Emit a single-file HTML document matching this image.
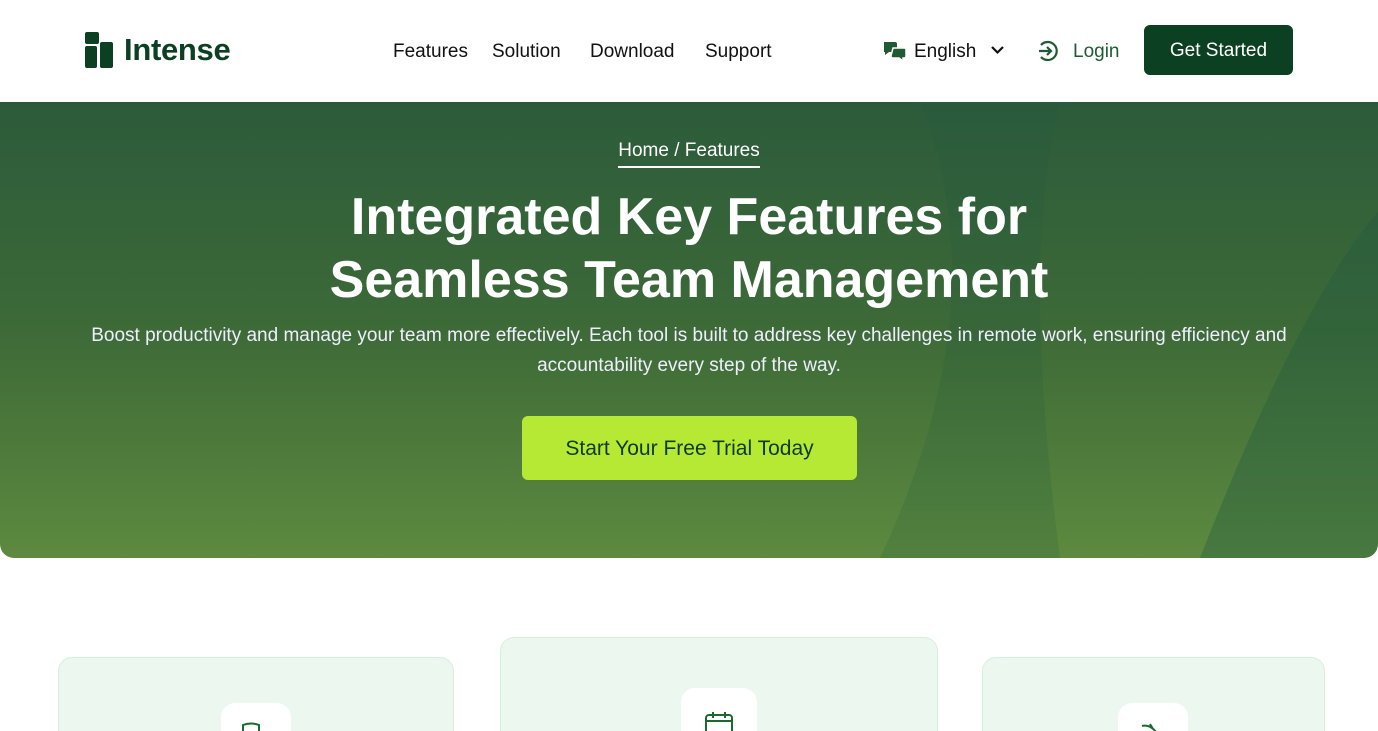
<!DOCTYPE html>
<html><head><meta charset="utf-8"><style>
*{margin:0;padding:0;box-sizing:border-box}
html,body{width:1378px;height:731px;overflow:hidden}
body{background:#fff;font-family:"Liberation Sans",sans-serif;position:relative}
.hdr{position:absolute;top:0;left:0;width:1378px;height:102px}
.logo{position:absolute;left:85px;top:32px;display:flex;align-items:center}
.logo span{font-weight:bold;font-size:31px;color:#0b4022;margin-left:9px;letter-spacing:-0.3px}
.nav{position:absolute;top:41px;font-size:19px;color:#111}
.hero{position:absolute;top:102px;left:0;width:1378px;height:456px;border-radius:0 0 14px 14px;overflow:hidden;background:linear-gradient(180deg,#2c5b3b 0%,#3d6a37 50%,#5d8a3f 100%)}
.t{position:absolute;left:0;width:1378px;text-align:center;color:#fff}
.card{position:absolute;background:#ecf7ef;border:1px solid #d6efdd;border-radius:14px}
.ib{position:absolute;background:#fff;border-radius:14px}
</style></head><body>
<div class="hdr">
 <div class="logo"><svg width="30" height="36" viewBox="0 0 30 36"><rect x="0" y="0" width="14" height="12" rx="2" fill="#0b4022"/><rect x="0" y="14" width="12" height="22" rx="2" fill="#0b4022"/><rect x="15" y="10" width="13" height="26" rx="2" fill="#0b4022"/></svg><span>Intense</span></div>
 <div class="nav" style="left:393px">Features</div>
 <div class="nav" style="left:492px">Solution</div>
 <div class="nav" style="left:590px">Download</div>
 <div class="nav" style="left:705px">Support</div>
 <svg style="position:absolute;left:882px;top:40px" width="26" height="22" viewBox="0 0 26 22"><path d="M2 2h11a2 2 0 0 1 2 2v6a2 2 0 0 1-2 2H7l-4 3v-3H2z" fill="#1f5a32"/><path d="M11 8h11a2 2 0 0 1 2 2v6a2 2 0 0 1-2 2h-1v3l-4-3h-6a2 2 0 0 1-2-2z" fill="#1f5a32" stroke="#fff" stroke-width="1.5"/></svg>
 <div class="nav" style="left:914px">English</div>
 <svg style="position:absolute;left:990px;top:44px" width="15" height="12" viewBox="0 0 15 12"><path d="M2 3l5.5 5.5L13 3" fill="none" stroke="#111" stroke-width="2.2"/></svg>
 <svg style="position:absolute;left:1036px;top:39px" width="24" height="24" viewBox="0 0 24 24" fill="none" stroke="#1f5a32" stroke-width="2.2"><path d="M5 6a9 9 0 1 1 0 12"/><path d="M3 12h12M11 8l4 4-4 4"/></svg>
 <div class="nav" style="left:1073px;color:#1f5a32">Login</div>
 <div style="position:absolute;left:1144px;top:25px;width:149px;height:50px;background:#0b4022;border-radius:6px;color:#fff;font-size:19px;text-align:center;line-height:52px">Get Started</div>
</div>
<div class="hero">
 <svg style="position:absolute;left:0;top:0" width="1378" height="456">
  <path d="M920 0 L1060 0 Q1020 150 1060 456 L880 456 Q1000 200 920 0Z" fill="#1f5a43" opacity=".18"/>
  <path d="M1378 110 Q1300 200 1200 456 L1378 456Z" fill="#1f5a43" opacity=".35"/>
 </svg>
 <div class="t" style="top:38px;font-size:19px"><span style="border-bottom:2px solid #fff;padding-bottom:5px">Home / Features</span></div>
 <div class="t" style="top:84px;font-size:52px;font-weight:bold;line-height:63px">Integrated Key Features for<br>Seamless Team Management</div>
 <div class="t" style="top:219px;font-size:19px;line-height:30px;color:#eef">Boost productivity and manage your team more effectively. Each tool is built to address key challenges in remote work, ensuring efficiency and<br>accountability every step of the way.</div>
 <div style="position:absolute;left:522px;top:314px;width:335px;height:64px;background:#b5e934;border-radius:6px;color:#0f3a1c;font-size:21px;text-align:center;line-height:66px">Start Your Free Trial Today</div>
</div>
<div class="card" style="left:58px;top:657px;width:396px;height:90px"></div>
<div class="ib" style="left:221px;top:703px;width:70px;height:50px"></div>
<div class="card" style="left:500px;top:637px;width:438px;height:110px"></div>
<div class="ib" style="left:681px;top:688px;width:76px;height:60px"></div>
<svg style="position:absolute;left:705px;top:711px" width="28" height="20" viewBox="0 0 28 20" fill="none" stroke="#1a6a2e" stroke-width="2"><rect x="1" y="4" width="26" height="20" rx="3"/><path d="M1 10h26M8 1v6M20 1v6"/></svg>
<div class="card" style="left:982px;top:657px;width:343px;height:90px"></div>
<div class="ib" style="left:1118px;top:703px;width:70px;height:50px"></div>
<svg style="position:absolute;left:240px;top:722px" width="24" height="12"><path d="M3 10V3q8-3 16 0v8" fill="none" stroke="#1a6a2e" stroke-width="2"/></svg>
<svg style="position:absolute;left:1140px;top:722px" width="24" height="12"><path d="M2 4q8-2 14 6M10 2l3 5" fill="none" stroke="#1a6a2e" stroke-width="2"/></svg>
</body></html>
